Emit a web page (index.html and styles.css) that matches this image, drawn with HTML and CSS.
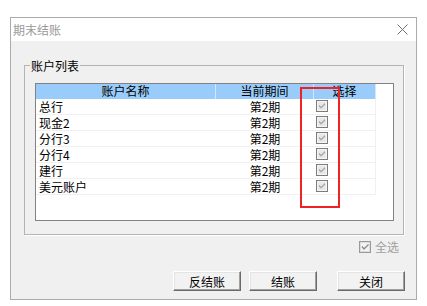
FILE: index.html
```html
<!DOCTYPE html>
<html lang="zh-CN">
<head>
    <meta charset="UTF-8">
    <title>期末结账</title>
    <link rel="stylesheet" href="styles.css">
</head>
<body>
    <div class="window">
        <div class="titlebar">
            <span class="title">期末结账</span>
            <svg class="close-x" width="11" height="11" viewBox="0 0 11 11">
                <path d="M0.5 0.5 L10.5 10.5 M10.5 0.5 L0.5 10.5" stroke="#707070" stroke-width="1" fill="none"/>
            </svg>
        </div>
        <div class="content">
            <fieldset class="group">
                <legend>账户列表</legend>
                <div class="list">
                    <table class="grid">
                        <colgroup>
                            <col class="w-name">
                            <col class="w-period">
                            <col class="w-check">
                            <col>
                        </colgroup>
                        <thead>
                            <tr>
                                <th>账户名称</th>
                                <th>当前期间</th>
                                <th>选择</th>
                                <th class="empty"></th>
                            </tr>
                        </thead>
                        <tbody id="rows"></tbody>
                    </table>
                </div>
            </fieldset>

            <div class="selectall">
                <svg width="12" height="12" viewBox="0 0 12 12">
                    <rect x="0.5" y="0.5" width="11" height="11" fill="#f4f4f4" stroke="#9a9a9a"/>
                    <rect x="1.5" y="1.5" width="9" height="9" fill="none" stroke="#dcdcdc"/>
                    <path d="M3 5.5 L5 8 L9.5 3.5" stroke="#8c8c8c" stroke-width="1.4" fill="none"/>
                </svg>
                <span>全选</span>
            </div>

            <div class="buttons">
                <button class="btn">反结账</button>
                <button class="btn">结账</button>
                <button class="btn btn-close">关闭</button>
            </div>
        </div>
    </div>

    <div class="mark"></div>

    <script>
        const accounts = ['总行', '现金2', '分行3', '分行4', '建行', '美元账户'];

        const check = `
            <svg class="cb" width="12" height="12" viewBox="0 0 12 12">
                <rect x="0.5" y="0.5" width="11" height="11" fill="#e8e8e8" stroke="#7c7c7c"/>
                <rect x="1.5" y="1.5" width="9" height="9" fill="none" stroke="#f6f6f6"/>
                <path d="M3 5.5 L5 7.8 L9 3.8" stroke="#a8a8a8" stroke-width="1.3" fill="none"/>
            </svg>`;

        let html = '';
        for (const name of accounts) {
            html += `<tr><td class="name">${name}</td><td class="period">第2期</td><td class="check">${check}</td><td class="empty"></td></tr>`;
        }
        document.getElementById('rows').innerHTML = html;
    </script>
</body>
</html>
```

FILE: styles.css
```css
body {
    margin: 0;
    background-color: #fff;
    font-family: "Noto Sans CJK SC", "Liberation Sans", sans-serif;
    font-size: 12px;
    position: relative;
    width: 427px;
    height: 306px;
    overflow: hidden;
}

.window {
    margin: 17px 0 0 10px;
    width: 407px;
    height: 283px;
    box-sizing: border-box;
    border: 1px solid #ababab;
    background-color: #f0f0f0;
    display: flex;
    flex-direction: column;
}

.titlebar {
    height: 23px;
    background-color: #fff;
    display: flex;
    align-items: center;
    justify-content: space-between;
    padding: 0 8px 0 2px;
}

.title {
    color: #9a9a9a;
    line-height: 14px;
}

.content {
    flex: 1;
    display: flex;
    flex-direction: column;
    padding: 0 11px 0 13px;
}

.group {
    margin: 17px 1px 0 0;
    padding: 10px 9px 13px 10px;
    border: 1px solid #b4b4b4;
    box-shadow: 1px 1px 0 #fff;
    min-width: 0;
}

.group legend {
    margin-left: -5px;
    padding: 0 1px;
    line-height: 15px;
    color: #000;
}

.list {
    height: 138px;
    box-sizing: border-box;
    border: 1px solid #828282;
    background-color: #fff;
    overflow: hidden;
}

.grid {
    width: 100%;
    table-layout: fixed;
    border-collapse: separate;
    border-spacing: 0;
}

.w-name { width: 180px; }
.w-period { width: 98px; }
.w-check { width: 62px; }

.grid th {
    height: 15px;
    padding: 0 0 2px;
    font-weight: normal;
    line-height: 13px;
    vertical-align: top;
    background-color: #99ccfa;
    border-right: 1px solid #d8e6f4;
    box-sizing: border-box;
}

.grid th.empty {
    background-color: #fff;
    border-right: none;
}

.grid td {
    height: 16px;
    padding: 1px 0 0;
    line-height: 14px;
    vertical-align: top;
    border-bottom: 1px solid #f0f0f0;
    box-sizing: border-box;
    white-space: nowrap;
}

.grid td.name {
    padding-left: 3px;
}

.grid td.period {
    text-align: center;
}

.grid td.check {
    padding: 1px 0 0 2px;
    border-right: 1px solid #f0f0f0;
}

.grid td.empty {
    border-bottom: none;
}

.cb {
    display: block;
}

.selectall {
    display: flex;
    justify-content: flex-end;
    align-items: center;
    gap: 4px;
    margin: 5px 6px 0 0;
    color: #a0a0a0;
    line-height: 14px;
}

.selectall svg {
    display: block;
}

.buttons {
    display: flex;
    justify-content: flex-end;
    gap: 8px;
    margin-top: 17px;
}

.btn {
    width: 68px;
    height: 20px;
    padding: 0;
    font-family: inherit;
    font-size: 12px;
    color: #000;
    background-color: #f2f2f2;
    border: 1px solid;
    border-color: #fff #6a6a6a #6a6a6a #fff;
    box-shadow: inset -1px -1px 0 #a0a0a0, inset 1px 1px 0 #e4e4e4;
}

.btn-close {
    margin-left: 12px;
}

.mark {
    position: absolute;
    left: 300px;
    top: 87px;
    width: 40px;
    height: 121px;
    box-sizing: border-box;
    border: 2px solid #ee2424;
}
```
